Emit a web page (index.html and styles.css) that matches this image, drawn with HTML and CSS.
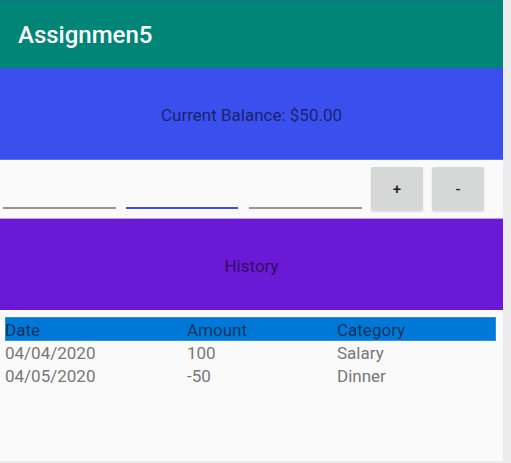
FILE: index.html
```html
<!DOCTYPE html>
<html>
<head>
<meta charset="utf-8">
<link rel="stylesheet" href="styles.css">
</head>
<body>
<div class="screen">
  <div class="app">
    <header class="appbar">Assignmen5</header>
    <section class="balance">Current Balance: $50.00</section>
    <section class="controls">
      <div class="field"></div>
      <div class="field focused"></div>
      <div class="field"></div>
      <button class="btn">+</button>
      <button class="btn">-</button>
    </section>
    <section class="history">History</section>
    <div class="table">
      <div class="row head"><span>Date</span><span>Amount</span><span>Category</span></div>
      <div class="row"><span>04/04/2020</span><span>100</span><span>Salary</span></div>
      <div class="row"><span>04/05/2020</span><span>-50</span><span>Dinner</span></div>
    </div>
  </div>
  <div class="strip"></div>
</div>
</body>
</html>
```

FILE: styles.css
```css
* { box-sizing: border-box; }
html, body { margin: 0; padding: 0; }
body {
  width: 511px;
  height: 463px;
  overflow: hidden;
  font-family: Roboto, "Liberation Sans", sans-serif;
  background: #ececef;
}
.screen {
  display: flex;
  height: 463px;
}
.app {
  width: 503px;
  height: 461px;
  background: #fafafa;
  display: flex;
  flex-direction: column;
}
.strip {
  width: 8px;
  background: #ececef;
}
.appbar {
  height: 68px;
  background: #008577;
  border-top: 1px solid #1d6e86;
  color: #fff;
  font-size: 24px;
  font-weight: 500;
  padding-left: 18px;
  display: flex;
  align-items: center;
  padding-top: 1px;
}
.balance {
  height: 92px;
  background: #3a4fee;
  border-bottom: 1px solid #6072f2;
  color: rgba(0, 0, 0, 0.58);
  font-size: 17px;
  display: flex;
  align-items: center;
  justify-content: center;
  padding-top: 3px;
}
.controls {
  height: 59px;
  display: flex;
  align-items: flex-start;
  padding-left: 3px;
  border-bottom: 1px solid #b9a6e6;
}
.field {
  width: 113px;
  height: 2px;
  background: #959595;
  margin-top: 47px;
  margin-right: 10px;
}
.field.focused {
  width: 112px;
  background: #3a4fee;
  margin-right: 11px;
}
.controls .field:nth-child(3) { margin-right: 9px; }
.btn {
  width: 52px;
  height: 44px;
  margin-top: 7px;
  margin-right: 9px;
  border: none;
  border-radius: 2px;
  background: #d6d7d7;
  box-shadow: 0 1px 2px rgba(0,0,0,0.12);
  font-family: Roboto, "Liberation Sans", sans-serif;
  font-size: 15px;
  font-weight: 500;
  color: #222;
  padding: 0;
}
.history {
  height: 91px;
  background: #6a1ad6;
  color: rgba(0, 0, 0, 0.58);
  font-size: 17px;
  display: flex;
  align-items: center;
  justify-content: center;
  padding-top: 3px;
}
.table {
  margin: 7px 7px 0 5px;
}
.row {
  display: grid;
  grid-template-columns: 182px 150px 1fr;
  height: 23px;
  align-items: center;
  font-size: 17px;
  color: #777;
  padding-top: 1px;
}
.row.head {
  height: 24px;
  background: #0078d7;
  box-shadow: inset 0 0 0 1px #2d8fdf;
  color: rgba(0, 0, 0, 0.6);
  padding-top: 2px;
}
.row span { white-space: nowrap; }
```
